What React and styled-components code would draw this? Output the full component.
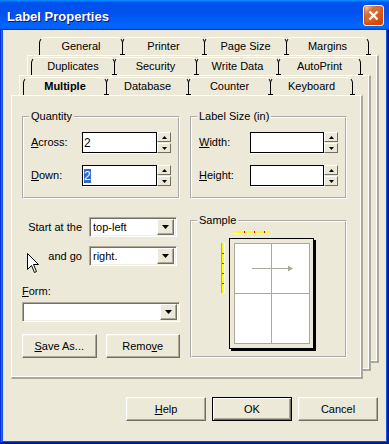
import React from "react";
import styled, { createGlobalStyle } from "styled-components";

const FACE = "#ECE9D8";

const GlobalStyle = createGlobalStyle`
  * { box-sizing: border-box; }
  html, body { margin: 0; padding: 0; }
  body {
    font-family: "Liberation Sans", Arial, sans-serif;
    font-size: 11px;
    line-height: 13px;
    color: #000;
    background: #0855dd;
  }
`;

const Window = styled.div`
  width: 389px;
  height: 444px;
  display: flex;
  flex-direction: column;
  background: #0855dd;
  box-shadow: inset -1px -1px #00138c, inset 1px 1px #0831d9,
    inset -2px -2px #001ea0, inset 2px 2px #166aee;
`;

const TitleBar = styled.div`
  height: 30px;
  flex: none;
  display: flex;
  align-items: center;
  justify-content: space-between;
  padding: 1px 5px 0 7px;
  background: linear-gradient(
    180deg,
    #0997ff,
    #0053ee 8%,
    #0050ee 40%,
    #0066ff 88%,
    #0066ff 93%,
    #005bff 95%,
    #003dd7 96%,
    #003dd7
  );
`;

const Title = styled.span`
  color: #fff;
  font-weight: 700;
  font-size: 13px;
  text-shadow: 1px 1px #0f1089;
  padding-top: 2px;
`;

const CloseButton = styled.div`
  width: 21px;
  height: 21px;
  border: 1px solid #fff;
  border-radius: 3px;
  background-image: radial-gradient(
    circle at 90% 90%,
    #cc4600 0,
    #dc6527 55%,
    #cd7546 70%,
    #ffccb2 90%,
    #fff 100%
  );
  box-shadow: inset 0 -1px 2px 1px #da4600;
  display: flex;
  align-items: center;
  justify-content: center;
`;

const Client = styled.div`
  flex: 1;
  margin: 0 3px 3px;
  background: ${FACE};
  padding: 7px 7px 0 8px;
`;

/* tab control: back sheets and the front layer share one grid cell */
const TabControl = styled.div`
  display: grid;
  width: 368px;
`;

const Sheet = styled.div`
  grid-area: 1 / 1;
  margin: ${(p) => p.$m};
  background: ${FACE};
  border-top: 1px solid #fff;
  border-left: 1px solid #fff;
  border-right: 2px solid #aca899;
  border-bottom: 2px solid #aca899;
  box-shadow: inset -1px -1px 0 #fff;
`;

const FrontLayer = styled.div`
  grid-area: 1 / 1;
  display: flex;
  flex-direction: column;
`;

const TabRow = styled.div`
  display: flex;
  height: 18px;
  margin-left: ${(p) => p.$indent}px;
  margin-top: ${(p) => (p.$first ? 0 : 2)}px;
`;

const Tab = styled.div`
  position: relative;
  width: ${(p) => p.$w}px;
  height: 18px;
  margin-left: ${(p) => (p.$first ? 0 : -1)}px;
  display: flex;
  align-items: center;
  justify-content: center;
  background: ${FACE};
  border: 1px solid #000;
  border-top-color: #fff;
  border-bottom: 0;
  border-radius: 6px 6px 0 0;
  font-weight: ${(p) => (p.$active ? 700 : 400)};

  &::after {
    content: "";
    position: absolute;
    z-index: 1;
    right: -3px;
    bottom: 0;
    width: 5px;
    height: 1px;
    background: #000;
  }
`;

const Page = styled.div`
  height: 284px;
  margin-right: 16px;
  background: ${FACE};
  border-top: 1px solid #fff;
  border-left: 1px solid #fff;
  border-right: 2px solid #aca899;
  border-bottom: 2px solid #aca899;
  box-shadow: inset -1px -1px 0 #fff;
  padding: 14px 0 0 10px;
  display: grid;
  grid-template-columns: 158px 157px;
  column-gap: 10px;
  row-gap: 15px;
  align-content: start;
`;

const Group = styled.fieldset`
  margin: 0;
  min-width: 0;
  padding: ${(p) => p.$pad || "9px 7px 11px"};
  border: 2px groove #fff;
`;

const Caption = styled.legend`
  padding: 0 2px;
  margin-left: -2px;
  line-height: 13px;
`;

const SpinRow = styled.div`
  display: flex;
  align-items: center;
  margin-top: ${(p) => (p.$first ? 0 : 12)}px;
`;

const FieldLabel = styled.span`
  width: 51px;
`;

const Key = styled.span`
  text-decoration: underline;
  text-underline-offset: 1px;
`;

const Field = styled.div`
  width: 75px;
  height: 21px;
  background: #fff;
  border: 1px solid #000;
  box-shadow: 1px 1px 0 #fff;
  display: flex;
  align-items: center;
  padding-left: 1px;
  font-size: 12px;
  line-height: 14px;
`;

const Selected = styled.span`
  background: #316ac5;
  color: #fff;
`;

const Spinner = styled.div`
  width: 14px;
  height: 21px;
  display: grid;
  grid-template-rows: 10px 10px;
  row-gap: 1px;
`;

const RaisedBox = styled.div`
  background: ${FACE};
  border: 1px solid;
  border-color: #fff #716f64 #716f64 #fff;
  display: flex;
  align-items: center;
  justify-content: center;
`;

const Controls = styled.div`
  display: flex;
  flex-direction: column;
  padding-top: 3px;
`;

const ComboRow = styled.div`
  position: relative;
  display: grid;
  grid-template-columns: 60px 88px;
  column-gap: 7px;
  align-items: center;
  margin-top: ${(p) => (p.$first ? 0 : 9)}px;
`;

const ComboLabel = styled.span`
  text-align: right;
`;

const Pointer = styled.svg`
  position: absolute;
  left: 5px;
  top: 7px;
`;

const Combo = styled.div`
  height: 20px;
  display: flex;
  align-items: center;
  background: #fff;
  border: 1px solid;
  border-color: #aca899 #fff #fff #aca899;
  box-shadow: inset 1px 1px 0 #716f64, inset -1px -1px 0 #f1efe2;
  padding: 2px 2px 2px 3px;
  margin-top: ${(p) => p.$mt || 0}px;
`;

const ComboValue = styled.span`
  flex: 1;
`;

const ComboButton = styled(RaisedBox)`
  width: 17px;
  height: 16px;
  box-shadow: inset -1px -1px 0 #aca899;
`;

const FormLabel = styled.span`
  margin-top: 19px;
`;

const ButtonPair = styled.div`
  display: flex;
  gap: 9px;
  margin-top: 12px;
  & > * {
    flex: 1;
  }
`;

const Button = styled.button`
  width: ${(p) => (p.$w ? `${p.$w}px` : "auto")};
  height: 24px;
  padding: 0;
  font: 11px "Liberation Sans", Arial, sans-serif;
  color: #000;
  background: ${FACE};
  border: 1px solid;
  border-color: ${(p) => (p.$default ? "#000" : "#fff #716f64 #716f64 #fff")};
  box-shadow: ${(p) =>
    p.$default
      ? "inset 1px 1px 0 #fff, inset -1px -1px 0 #716f64, inset -2px -2px 0 #aca899"
      : "inset -1px -1px 0 #aca899, inset 1px 1px 0 #f1efe2"};
`;

const SampleArt = styled.svg`
  display: block;
  margin: 1px 0 0 20px;
`;

const ButtonBar = styled.div`
  display: flex;
  justify-content: flex-end;
  gap: 6px;
  width: 368px;
  padding-right: 1px;
  margin-top: 18px;
`;

const TABS = [
  { indent: 28, items: ["General", "Printer", "Page Size", "Margins"] },
  { indent: 20, items: ["Duplicates", "Security", "Write Data", "AutoPrint"] },
  { indent: 12, items: ["Multiple", "Database", "Counter", "Keyboard"] },
];
const TAB_W = [84, 83, 83, 83];

function Tri({ up, w = 7, h = 4 }) {
  const pts = up ? `0,${h} ${w},${h} ${w / 2},0` : `0,0 ${w},0 ${w / 2},${h}`;
  return (
    <svg width={w} height={h} viewBox={`0 0 ${w} ${h}`}>
      <polygon points={pts} fill="#000" />
    </svg>
  );
}

function SpinField({ label, k, value, first }) {
  return (
    <SpinRow $first={first}>
      <FieldLabel>
        <Key>{k}</Key>
        {label}
      </FieldLabel>
      <Field>{value}</Field>
      <Spinner>
        <RaisedBox>
          <Tri up w={5} h={3} />
        </RaisedBox>
        <RaisedBox>
          <Tri w={5} h={3} />
        </RaisedBox>
      </Spinner>
    </SpinRow>
  );
}

function Dropdown({ value, mt }) {
  return (
    <Combo $mt={mt}>
      <ComboValue>{value}</ComboValue>
      <ComboButton>
        <Tri />
      </ComboButton>
    </Combo>
  );
}

function Sample() {
  const grey = "#aca899";
  return (
    <SampleArt width="100" height="124" viewBox="0 0 100 124">
      <rect x="15" y="2" width="36" height="2" fill="#ffff00" />
      <rect x="15" y="4" width="36" height="1" fill="#fff" />
      {[25, 35, 45].map((x) => (
        <rect key={x} x={x} y="2" width="1" height="2" fill="#ff0000" />
      ))}
      <rect x="2" y="14" width="1" height="50" fill={grey} />
      <rect x="3" y="14" width="2" height="50" fill="#ffff00" />
      <rect x="5" y="14" width="1" height="50" fill="#fff" />
      {[24, 34, 44, 54].map((y) => (
        <rect key={y} x="3" y={y} width="2" height="1" fill="#ff0000" />
      ))}
      <rect x="12" y="11" width="85" height="111" fill="#000" />
      <rect x="10.5" y="9.5" width="84" height="110" fill={FACE} stroke="#000" />
      <rect x="15.5" y="14.5" width="75" height="100" fill="#fff" stroke={grey} />
      <line x1="52.5" y1="14.5" x2="52.5" y2="114.5" stroke={grey} />
      <line x1="15.5" y1="64.5" x2="90.5" y2="64.5" stroke={grey} />
      <line x1="33" y1="39.5" x2="70" y2="39.5" stroke={grey} />
      <polygon points="69,36.5 74,39.5 69,42.5" fill={grey} />
    </SampleArt>
  );
}

export default function App() {
  return (
    <>
      <GlobalStyle />
      <Window>
        <TitleBar>
          <Title>Label Properties</Title>
          <CloseButton>
            <svg width="11" height="11" viewBox="0 0 11 11">
              <path d="M1.5 1.5 L9.5 9.5 M9.5 1.5 L1.5 9.5" stroke="#fff" strokeWidth="2.4" />
            </svg>
          </CloseButton>
        </TitleBar>

        <Client>
          <TabControl>
            <Sheet $m="18px 0 16px 16px" />
            <Sheet $m="38px 8px 8px 8px" />
            <FrontLayer>
              {TABS.map((row, r) => (
                <TabRow key={r} $indent={row.indent} $first={r === 0}>
                  {row.items.map((t, i) => (
                    <Tab key={t} $w={TAB_W[i]} $first={i === 0} $active={t === "Multiple"}>
                      {t}
                    </Tab>
                  ))}
                </TabRow>
              ))}

              <Page>
                <Group>
                  <Caption>Quantity</Caption>
                  <SpinField first k="A" label="cross:" value="2" />
                  <SpinField k="D" label="own:" value={<Selected>2</Selected>} />
                </Group>

                <Group>
                  <Caption>Label Size (in)</Caption>
                  <SpinField first k="W" label="idth:" value="" />
                  <SpinField k="H" label="eight:" value="" />
                </Group>

                <Controls>
                  <ComboRow $first>
                    <ComboLabel>Start at the</ComboLabel>
                    <Dropdown value="top-left" />
                  </ComboRow>
                  <ComboRow>
                    <ComboLabel>and go</ComboLabel>
                    <Dropdown value="right." />
                    <Pointer width="13" height="21" viewBox="0 0 13 21">
                      <path
                        d="M0.5 0.5 L0.5 16.5 L4.5 12.5 L7.5 19.5 L9.5 18.5 L6.5 11.5 L11.5 11.5 Z"
                        fill="#fff"
                        stroke="#000"
                      />
                    </Pointer>
                  </ComboRow>
                  <FormLabel>
                    <Key>F</Key>orm:
                  </FormLabel>
                  <Dropdown value="" mt={4} />
                  <ButtonPair>
                    <Button>
                      <Key>S</Key>ave As...
                    </Button>
                    <Button>
                      Remo<Key>v</Key>e
                    </Button>
                  </ButtonPair>
                </Controls>

                <Group $pad="1px 7px 0">
                  <Caption>Sample</Caption>
                  <Sample />
                </Group>
              </Page>
            </FrontLayer>
          </TabControl>

          <ButtonBar>
            <Button $w={80}>
              <Key>H</Key>elp
            </Button>
            <Button $w={80} $default>
              OK
            </Button>
            <Button $w={80}>Cancel</Button>
          </ButtonBar>
        </Client>
      </Window>
    </>
  );
}
